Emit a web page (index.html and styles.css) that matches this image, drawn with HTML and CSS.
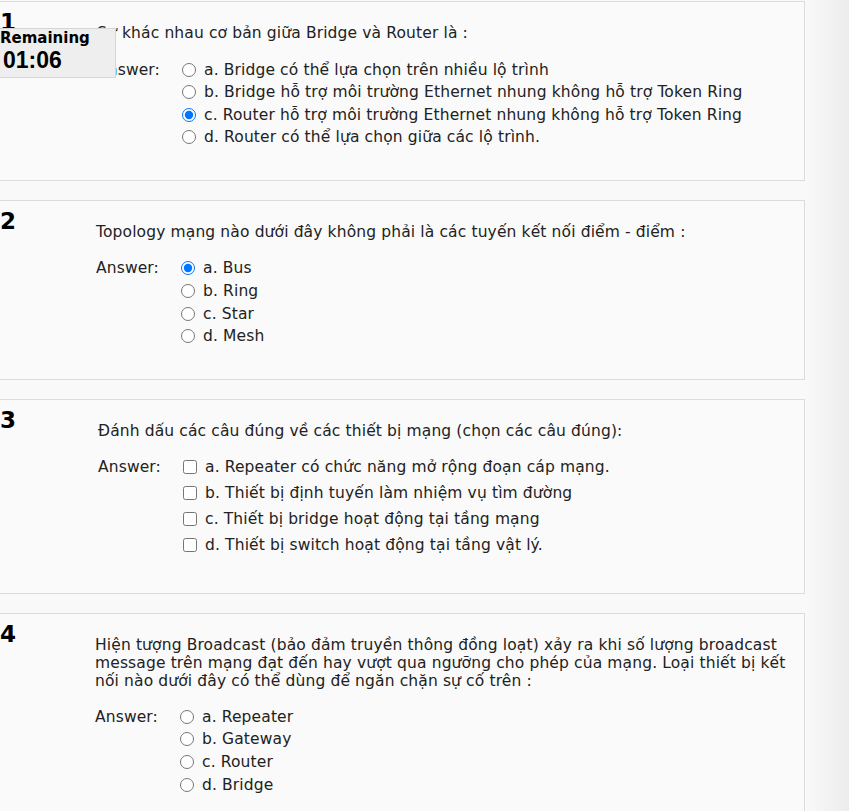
FILE: index.html
```html
<!DOCTYPE html>
<html lang="vi">
<head>
<meta charset="utf-8">
<title>Quiz</title>
<link rel="stylesheet" href="styles.css">
</head>
<body>
<div class="page">
  <div class="que q1">
    <div class="info"><h3 class="no">1</h3></div>
    <div class="content">
      <div class="qtext">Sự khác nhau cơ bản giữa Bridge và Router là :</div>
      <div class="ablock">
        <div class="prompt">Answer:</div>
        <div class="answer">
          <label class="opt"><input type="radio" name="q1"><span>a. Bridge có thể lựa chọn trên nhiều lộ trình</span></label>
          <label class="opt"><input type="radio" name="q1"><span>b. Bridge hỗ trợ môi trường Ethernet nhung không hỗ trợ Token Ring</span></label>
          <label class="opt"><input type="radio" name="q1" checked><span>c. Router hỗ trợ môi trường Ethernet nhung không hỗ trợ Token Ring</span></label>
          <label class="opt"><input type="radio" name="q1"><span>d. Router có thể lựa chọn giữa các lộ trình.</span></label>
        </div>
      </div>
    </div>
  </div>

  <div class="que q2">
    <div class="info"><h3 class="no">2</h3></div>
    <div class="content">
      <div class="qtext">Topology mạng nào dưới đây không phải là các tuyến kết nối điểm - điểm :</div>
      <div class="ablock">
        <div class="prompt">Answer:</div>
        <div class="answer">
          <label class="opt"><input type="radio" name="q2" checked><span>a. Bus</span></label>
          <label class="opt"><input type="radio" name="q2"><span>b. Ring</span></label>
          <label class="opt"><input type="radio" name="q2"><span>c. Star</span></label>
          <label class="opt"><input type="radio" name="q2"><span>d. Mesh</span></label>
        </div>
      </div>
    </div>
  </div>

  <div class="que q3 multi">
    <div class="info"><h3 class="no">3</h3></div>
    <div class="content">
      <div class="qtext">Đánh dấu các câu đúng về các thiết bị mạng (chọn các câu đúng):</div>
      <div class="ablock">
        <div class="prompt">Answer:</div>
        <div class="answer">
          <label class="opt"><input type="checkbox"><span>a. Repeater có chức năng mở rộng đoạn cáp mạng.</span></label>
          <label class="opt"><input type="checkbox"><span>b. Thiết bị định tuyến làm nhiệm vụ tìm đường</span></label>
          <label class="opt"><input type="checkbox"><span>c. Thiết bị bridge hoạt động tại tầng mạng</span></label>
          <label class="opt"><input type="checkbox"><span>d. Thiết bị switch hoạt động tại tầng vật lý.</span></label>
        </div>
      </div>
    </div>
  </div>

  <div class="que q4">
    <div class="info"><h3 class="no">4</h3></div>
    <div class="content">
      <div class="qtext">Hiện tượng Broadcast (bảo đảm truyền thông đồng loạt) xảy ra khi số lượng broadcast message trên mạng đạt đến hay vượt qua ngưỡng cho phép của mạng. Loại thiết bị kết nối nào dưới đây có thể dùng để ngăn chặn sự cố trên :</div>
      <div class="ablock">
        <div class="prompt">Answer:</div>
        <div class="answer">
          <label class="opt"><input type="radio" name="q4"><span>a. Repeater</span></label>
          <label class="opt"><input type="radio" name="q4"><span>b. Gateway</span></label>
          <label class="opt"><input type="radio" name="q4"><span>c. Router</span></label>
          <label class="opt"><input type="radio" name="q4"><span>d. Bridge</span></label>
        </div>
      </div>
    </div>
  </div>
</div>

<div class="timer">
  <div class="timer-label">Remaining</div>
  <div class="timer-time">01:06</div>
</div>
</body>
</html>
```

FILE: styles.css
```css
html, body {
  margin: 0;
  padding: 0;
}

body {
  font-family: "DejaVu Sans", Verdana, sans-serif;
  font-size: 15.5px;
  letter-spacing: 0.13px;
  line-height: 18px;
  color: #222;
  background: linear-gradient(to right, #f9f9f9 0, #f9f9f9 806px, #ececec 849px);
  min-height: 811px;
  overflow: hidden;
}

.page {
  width: 805px;
  padding-top: 1px;
}

.que {
  display: flex;
  background: #fafafa;
  border: 1px solid #dcdcdc;
  border-left: 0;
  padding: 7px 0 31px 0;
  margin-bottom: 19px;
}

.info {
  flex: 0 0 96px;
}

.q1 .info { flex-basis: 97px; }
.q3 .info { flex-basis: 98px; }
.q4 .info { flex-basis: 95px; }

.no {
  margin: 0;
  font-size: 23px;
  line-height: normal;
  letter-spacing: 0;
  font-weight: bold;
  color: #000;
}

.content {
  flex: 1;
  padding: 15px 8px 0 0;
}

.qtext {
  margin: 0;
}

.ablock {
  display: flex;
  margin-top: 16.5px;
}

.q4 .ablock {
  margin-top: 15.5px;
}

.prompt {
  flex: 0 0 80px;
  line-height: 22.6px;
}

.answer {
  display: flex;
  flex-direction: column;
}

.opt {
  display: block;
  height: 22.6px;
  line-height: 22.6px;
  white-space: nowrap;
}

.opt input {
  margin: 0 8px 0 5px;
  width: 14px;
  height: 14px;
  vertical-align: -2px;
}

.multi {
  padding-bottom: 35px;
}

.multi .ablock {
  margin-top: 14.5px;
}

.multi .prompt,
.multi .opt {
  line-height: 26px;
}

.multi .opt {
  height: 26px;
}

.timer {
  position: fixed;
  left: -4px;
  top: 28px;
  width: 115px;
  height: 48px;
  padding-left: 3px;
  background: #eeeeee;
  border: 1px solid #d6d6d6;
  color: #000;
  letter-spacing: 0;
}

.timer-label {
  font-family: "DejaVu Sans", Verdana, sans-serif;
  font-weight: bold;
  font-size: 15px;
  line-height: 17px;
  padding-top: 1px;
}

.timer-time {
  font-family: "Liberation Sans", Arial, sans-serif;
  font-weight: bold;
  font-size: 23px;
  line-height: 26px;
  margin-left: 3px;
}
```
